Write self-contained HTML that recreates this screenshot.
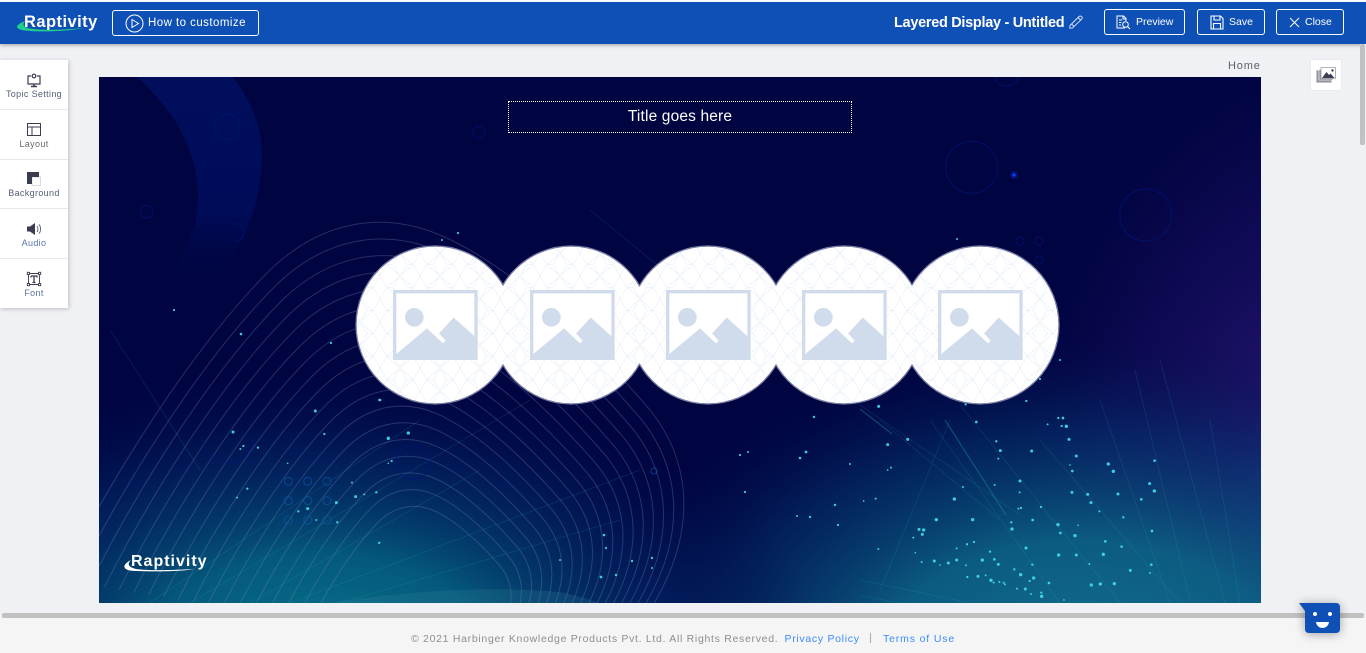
<!DOCTYPE html>
<html><head><meta charset="utf-8"><title>Raptivity</title>
<style>
html,body{margin:0;padding:0;width:1366px;height:653px;overflow:hidden;background:#f0f1f5;font-family:"Liberation Sans",sans-serif}
.a{position:absolute;white-space:nowrap}
.btn{position:absolute;box-sizing:border-box;border:1px solid #fff;border-radius:3px;height:26px;top:9px;color:#fff}
.side{position:absolute;left:0;width:68px;text-align:center;font-size:9px;letter-spacing:.35px;color:#55607a}
svg{position:absolute;overflow:visible}
</style></head><body>
<!-- stage -->
<svg style="left:99px;top:77px" width="1162" height="526" viewBox="99 77 1162 526">
<defs>
<clipPath id="c"><rect x="99" y="77" width="1162" height="526"/></clipPath>
<radialGradient id="t1" gradientUnits="userSpaceOnUse" cx="320" cy="660" r="1" gradientTransform="translate(320 660) scale(500 300) translate(-320 -660)"><stop offset="0" stop-color="#07788e"/><stop offset=".35" stop-color="#056282" stop-opacity=".9"/><stop offset=".7" stop-color="#02296a" stop-opacity=".55"/><stop offset="1" stop-color="#010a48" stop-opacity="0"/></radialGradient>
<radialGradient id="t2" gradientUnits="userSpaceOnUse" cx="1080" cy="680" r="1" gradientTransform="translate(1080 680) scale(520 350) translate(-1080 -680)"><stop offset="0" stop-color="#14748f"/><stop offset=".4" stop-color="#0c6285" stop-opacity=".92"/><stop offset=".72" stop-color="#04306c" stop-opacity=".6"/><stop offset="1" stop-color="#010a48" stop-opacity="0"/></radialGradient>
<radialGradient id="t3" gradientUnits="userSpaceOnUse" cx="1330" cy="560" r="1" gradientTransform="translate(1330 560) scale(340 540) translate(-1330 -560)"><stop offset="0" stop-color="#2d4f95"/><stop offset=".35" stop-color="#1f1468"/><stop offset=".7" stop-color="#120b58" stop-opacity=".7"/><stop offset="1" stop-color="#05064a" stop-opacity="0"/></radialGradient>
<linearGradient id="cr" x1="0" y1="0" x2="0" y2="1"><stop offset="0" stop-color="#000e5c"/><stop offset=".6" stop-color="#000c58"/><stop offset="1" stop-color="#000440" stop-opacity="0"/></linearGradient>
<path id="w" d="M60 580C110 480 190 350 270 270C320 222 380 210 440 235C510 265 590 340 650 410C690 460 700 530 650 610" fill="none" stroke="#7d8cc0" stroke-width="1" vector-effect="non-scaling-stroke"/>
<pattern id="hex" width="40" height="23" patternUnits="userSpaceOnUse"><path d="M0 0L6.700 11.500L0 23M40 0L33.300 11.500L40 23M6.700 11.500H13.300M26.700 11.500H33.300M13.300 11.500L20 0L26.700 11.500L20 23ZM0 0L13.300 11.500M40 0L26.700 11.500M0 23L13.300 11.500M40 23L26.700 11.500" fill="none" stroke="#eff4fb" stroke-width=".9"/></pattern>
<g id="pic" transform="scale(.3333)"><path d="M0 0H254V210H0Z" fill="#d0dcec"/><path d="M10 10H244V138L182 83L138 130L158 152L150 160L102 115L10 192Z" fill="#fff"/><circle cx="64" cy="82" r="28" fill="#d0dcec"/></g>
</defs>
<g clip-path="url(#c)">
<rect x="99" y="77" width="1162" height="526" fill="#000440"/>
<path d="M137 77C190 125 205 175 195 225C185 255 170 280 155 300L205 300C245 250 262 200 262 154C262 125 250 100 233 77Z" fill="url(#cr)"/>
<rect x="99" y="77" width="1162" height="526" fill="url(#t3)"/>
<rect x="99" y="77" width="1162" height="526" fill="url(#t2)"/>
<rect x="99" y="77" width="1162" height="526" fill="url(#t1)"/>
<!-- contour lines -->
<g opacity=".3">
<use href="#w"/>
<use href="#w" transform="translate(430 640) scale(.96) translate(-430 -640)"/>
<use href="#w" transform="translate(430 640) scale(.92) translate(-430 -640)"/>
<use href="#w" transform="translate(430 640) scale(.88) translate(-430 -640)"/>
<use href="#w" transform="translate(430 640) scale(.84) translate(-430 -640)"/>
<use href="#w" transform="translate(430 640) scale(.8) translate(-430 -640)"/>
<use href="#w" transform="translate(430 640) scale(.76) translate(-430 -640)"/>
<use href="#w" transform="translate(430 640) scale(.72) translate(-430 -640)"/>
<use href="#w" transform="translate(430 640) scale(.68) translate(-430 -640)"/>
<use href="#w" transform="translate(430 640) scale(.64) translate(-430 -640)"/>
<use href="#w" transform="translate(430 640) scale(.6) translate(-430 -640)"/>
<use href="#w" transform="translate(430 640) scale(.56) translate(-430 -640)"/>
<use href="#w" transform="translate(430 640) scale(.52) translate(-430 -640)"/>
<use href="#w" transform="translate(430 640) scale(.48) translate(-430 -640)"/>
<use href="#w" transform="translate(430 640) scale(.44) translate(-430 -640)"/>
<use href="#w" transform="translate(430 640) scale(.4) translate(-430 -640)"/>
<use href="#w" transform="translate(430 640) scale(.36) translate(-430 -640)"/>
<use href="#w" transform="translate(430 640) scale(.32) translate(-430 -640)"/>
</g>
<path d="M330 603C400 592 480 585 560 592C580 596 590 600 600 603Z" fill="#3d8aa0" opacity=".2"/>
<!-- teal rays -->
<g stroke="#27b7c4" stroke-width=".8" fill="none" opacity=".17">
<path d="M150 603L420 420M190 603L530 400M250 603L480 470M290 603L640 470M340 603L620 520M110 330L200 470M590 210L700 300"/>
<path d="M860 405L1020 515M960 405L1120 603M1040 440L1180 603M930 420L1060 603M880 420L1000 520M1135 370L1190 600M1160 360L1225 603M1210 420L1240 603M1100 400L1170 603M950 420L880 590M860 580L970 603M860 596L1000 620"/>
</g>
<path d="M860 409L892 434M945 420L1006 515" stroke="#1f9aa8" stroke-width="1.200" opacity=".4" fill="none"/>
<!-- dark rings -->
<g fill="none" stroke="#00177a" stroke-width="1.200" opacity=".6">
<circle cx="227.700" cy="126.700" r="12.500"/><circle cx="146.700" cy="211.700" r="6.300"/><path d="M235 223A9 9 0 0 1 235 241"/>
<circle cx="479" cy="132" r="6"/><circle cx="971.700" cy="167.300" r="26"/><circle cx="1145.700" cy="215" r="26"/><circle cx="1006.700" cy="73" r="13"/>
<circle cx="1020" cy="241" r="4"/><circle cx="1039" cy="241" r="4"/><circle cx="1039" cy="260" r="4"/><circle cx="1020" cy="260" r="4"/>
<path d="M202 436A26 26 0 0 0 254 436"/><circle cx="412.700" cy="462" r="17"/>
</g>
<g fill="none" stroke="#0b5cb0" stroke-width="1.100" opacity=".6">
<circle cx="288.300" cy="481.300" r="4"/><circle cx="307.700" cy="481.300" r="4"/><circle cx="327" cy="481.300" r="4"/>
<circle cx="288.300" cy="500.700" r="4"/><circle cx="307.700" cy="500.700" r="4"/><circle cx="327" cy="500.700" r="4"/>
<circle cx="288.300" cy="520" r="4"/><circle cx="307.700" cy="520" r="4"/><circle cx="327" cy="520" r="4"/>
<circle cx="654" cy="471" r="3"/>
</g>
<circle cx="1014" cy="175" r="4" fill="#0a2fd0" opacity=".3"/><circle cx="1014" cy="175" r="1.800" fill="#0a37f0"/>
<!-- stars right -->
<g fill="#43dbe8" opacity=".92" transform="translate(860 400) scale(.3333)">
<circle cx="56" cy="19" r="4.500"/><circle cx="317" cy="13" r="3.500"/><circle cx="499" cy="3" r="3.500"/><circle cx="349" cy="66" r="4"/><circle cx="595" cy="54" r="3.500"/><circle cx="609" cy="54" r="4"/><circle cx="563" cy="73" r="3"/><circle cx="605" cy="78" r="3.500"/><circle cx="619" cy="79" r="5"/><circle cx="143" cy="118" r="4.500"/><circle cx="83" cy="134" r="4.500"/><circle cx="409" cy="124" r="3.500"/><circle cx="627" cy="118" r="4.500"/><circle cx="421" cy="152" r="4.500"/><circle cx="515" cy="153" r="4.500"/><circle cx="649" cy="168" r="4.500"/><circle cx="415" cy="176" r="3"/><circle cx="884" cy="182" r="4"/><circle cx="745" cy="192" r="5"/><circle cx="630" cy="195" r="2.500"/><circle cx="93" cy="203" r="3"/><circle cx="83" cy="210" r="2.500"/><circle cx="637" cy="213" r="4"/><circle cx="760" cy="214" r="5"/><circle cx="480" cy="243" r="4.500"/><circle cx="404" cy="255" r="3"/><circle cx="309" cy="261" r="3"/><circle cx="869" cy="251" r="4.500"/><circle cx="883" cy="273" r="5"/><circle cx="479" cy="277" r="3"/><circle cx="636" cy="277" r="4.500"/><circle cx="683" cy="283" r="4.500"/><circle cx="774" cy="282" r="4.500"/><circle cx="283" cy="297" r="5"/><circle cx="47" cy="296" r="3"/><circle cx="11" cy="303" r="2.500"/><circle cx="844" cy="298" r="4"/><circle cx="693" cy="308" r="4.500"/><circle cx="475" cy="326" r="3"/><circle cx="483" cy="324" r="3.500"/><circle cx="543" cy="321" r="3.500"/><circle cx="718" cy="334" r="3"/><circle cx="229" cy="359" r="5"/><circle cx="338" cy="359" r="5"/><circle cx="518" cy="360" r="4"/><circle cx="790" cy="352" r="3.500"/><circle cx="454" cy="367" r="3.500"/><circle cx="594" cy="374" r="5"/><circle cx="654" cy="376" r="2.500"/><circle cx="456" cy="387" r="5"/><circle cx="177" cy="388" r="4.500"/><circle cx="191" cy="390" r="5"/><circle cx="601" cy="399" r="4"/><circle cx="187" cy="403" r="4.500"/><circle cx="160" cy="413" r="3"/><circle cx="645" cy="407" r="5"/><circle cx="876" cy="393" r="4"/><circle cx="342" cy="426" r="3.500"/><circle cx="321" cy="433" r="3.500"/><circle cx="736" cy="424" r="4"/><circle cx="785" cy="440" r="4"/><circle cx="55" cy="447" r="3"/><circle cx="290" cy="445" r="3"/><circle cx="498" cy="444" r="4.500"/><circle cx="390" cy="455" r="3.500"/><circle cx="166" cy="458" r="2.500"/><circle cx="596" cy="465" r="5"/><circle cx="649" cy="465" r="4.500"/><circle cx="730" cy="463" r="5"/><circle cx="223" cy="483" r="4.500"/><circle cx="185" cy="486" r="3"/><circle cx="290" cy="480" r="4.500"/><circle cx="265" cy="489" r="4.500"/><circle cx="240" cy="495" r="2.500"/><circle cx="367" cy="480" r="5"/><circle cx="403" cy="478" r="4"/><circle cx="415" cy="493" r="4.500"/><circle cx="318" cy="496" r="3"/><circle cx="517" cy="494" r="3.500"/><circle cx="688" cy="492" r="3"/><circle cx="874" cy="494" r="4"/><circle cx="463" cy="508" r="3.500"/><circle cx="811" cy="511" r="4.500"/><circle cx="870" cy="519" r="3"/><circle cx="322" cy="531" r="3.500"/><circle cx="354" cy="529" r="4.500"/><circle cx="377" cy="526" r="3"/><circle cx="482" cy="524" r="5"/><circle cx="521" cy="534" r="5"/><circle cx="393" cy="541" r="5"/><circle cx="401" cy="548" r="3"/><circle cx="418" cy="546" r="3"/><circle cx="431" cy="548" r="3"/><circle cx="435" cy="553" r="3"/><circle cx="509" cy="543" r="3.500"/><circle cx="567" cy="549" r="4"/><circle cx="694" cy="555" r="5"/><circle cx="721" cy="552" r="5"/><circle cx="763" cy="551" r="5"/><circle cx="471" cy="566" r="3"/><circle cx="496" cy="567" r="4.500"/><circle cx="513" cy="582" r="3"/><circle cx="544" cy="578" r="3.500"/><circle cx="545" cy="589" r="5"/><circle cx="612" cy="600" r="2.500"/>
</g>
<!-- stars left -->
<g fill="#43dbe8" opacity=".92" transform="translate(100 400) scale(.3333)">
<circle cx="646" cy="33" r="4.500"/><circle cx="838" cy="0" r="3.500"/><circle cx="399" cy="96" r="4.500"/><circle cx="673" cy="102" r="3.500"/><circle cx="865" cy="115" r="5"/><circle cx="925" cy="99" r="5"/><circle cx="430" cy="138" r="3.500"/><circle cx="421" cy="147" r="3"/><circle cx="474" cy="143" r="3.500"/><circle cx="563" cy="190" r="2.500"/><circle cx="875" cy="183" r="3.500"/><circle cx="865" cy="190" r="2.500"/><circle cx="442" cy="266" r="3.500"/><circle cx="411" cy="293" r="3"/><circle cx="756" cy="248" r="3"/><circle cx="767" cy="290" r="4.500"/><circle cx="793" cy="283" r="3"/><circle cx="829" cy="277" r="3.500"/><circle cx="709" cy="308" r="4.500"/><circle cx="623" cy="326" r="4.500"/><circle cx="595" cy="334" r="3.500"/><circle cx="649" cy="360" r="3"/><circle cx="712" cy="367" r="3.500"/><circle cx="838" cy="428" r="3"/>
</g>
<!-- stars page coords -->
<g fill="#43dbe8" opacity=".92">
<circle cx="174" cy="310" r="1.100"/><circle cx="241" cy="334" r="1.300"/><circle cx="331" cy="343" r="1.100"/><circle cx="380" cy="400" r="1.300"/><circle cx="458" cy="233" r="1.100"/><circle cx="442" cy="240" r="1"/><circle cx="957" cy="239" r="1"/><circle cx="601" cy="577" r="1.400"/><circle cx="616" cy="575" r="1.200"/><circle cx="632" cy="561" r="1.200"/><circle cx="652" cy="558" r="1.200"/><circle cx="652" cy="568" r="1"/><circle cx="604" cy="535" r="1.300"/><circle cx="606" cy="548" r="1.100"/><circle cx="740" cy="455" r="1.100"/><circle cx="748" cy="452" r="1"/><circle cx="800" cy="458" r="1.300"/><circle cx="806" cy="452" r="1.400"/><circle cx="745" cy="492" r="1.100"/><circle cx="835" cy="505" r="1.200"/><circle cx="810" cy="517" r="1.200"/><circle cx="838" cy="525" r="1.100"/><circle cx="797" cy="516" r="1"/><circle cx="814" cy="417" r="1.200"/><circle cx="850" cy="464" r="1"/><circle cx="1040" cy="379" r="1.100"/><circle cx="1060" cy="360" r="1"/><circle cx="560" cy="560" r="1"/><circle cx="379" cy="543" r="1"/>
</g>
<!-- circles -->
<g fill="none" stroke="#7a7fa8" stroke-width="1.200">
<circle cx="435" cy="325" r="79"/><circle cx="571" cy="325" r="79"/><circle cx="708" cy="325" r="79"/><circle cx="844" cy="325" r="79"/><circle cx="980" cy="325" r="79"/>
</g>
<g fill="#fff"><circle cx="435" cy="325" r="78.400"/><circle cx="571" cy="325" r="78.400"/><circle cx="708" cy="325" r="78.400"/><circle cx="844" cy="325" r="78.400"/><circle cx="980" cy="325" r="78.400"/></g>
<g fill="url(#hex)"><circle cx="435" cy="325" r="78"/><circle cx="571" cy="325" r="78"/><circle cx="708" cy="325" r="78"/><circle cx="844" cy="325" r="78"/><circle cx="980" cy="325" r="78"/></g>
<use href="#pic" transform="translate(393 290)"/><use href="#pic" transform="translate(530 290)"/><use href="#pic" transform="translate(666 290)"/><use href="#pic" transform="translate(802 290)"/><use href="#pic" transform="translate(938 290)"/>
<!-- stage logo swoosh -->
<path d="M131 560C121 565 122 571 136 571C160 572 185 571 194 569C175 570 150 571 136 569C128 567 127 564 131 560Z" fill="#fff"/>
</g>
</svg>
<div class="a" style="left:131px;top:553px;font-size:16px;font-weight:bold;letter-spacing:1px;color:#fff;line-height:18px">Raptivity</div>
<div class="a" style="left:508px;top:101px;width:344px;height:32px;box-sizing:border-box;border:1px dotted #fff;color:#fff;font-size:15.500px;letter-spacing:.15px;line-height:29px;text-align:center">Title goes here</div>

<!-- header -->
<div class="a" style="left:0;top:2px;width:1366px;height:42px;background:#0e50b5;box-shadow:0 1px 4px rgba(0,0,0,.35)"></div>
<div class="a" style="left:0;top:0;width:1366px;height:2px;background:#fbfcfe"></div>
<div class="a" style="left:24px;top:12px;font-size:16.500px;line-height:20px;font-weight:bold;letter-spacing:.45px;color:#fff">Raptivity</div>
<svg style="left:15px;top:21px" width="72" height="12" viewBox="0 0 72 12"><path d="M10 0C0 4 -1 8 10 9.500C28 11.500 54 10 69 7C50 9 26 9.500 14 7.500C8 6 7 3 10 0Z" fill="#1fd08a"/></svg>
<div class="btn" style="left:112px;width:147px;top:10px"><svg style="left:12px;top:3px" width="19" height="19" viewBox="0 0 19 19" fill="none" stroke="#fff" stroke-width="1"><circle cx="9.500" cy="9.500" r="8.500"/><path d="M7 5.500L13.500 9.500L7 13.500Z"/></svg><span class="a" style="left:35px;top:0;font-size:11.500px;line-height:24px;letter-spacing:.45px">How to customize</span></div>
<div class="a" style="left:894px;top:14px;font-size:14.500px;line-height:18px;font-weight:bold;letter-spacing:-.3px;color:#fff">Layered Display - Untitled</div>
<svg style="left:1069px;top:15px" width="14" height="14" viewBox="0 0 14 14" fill="none" stroke="#dfe8f8" stroke-width=".9"><path d="M1 10.500L10 1.500C11 .6 12.500 1.200 13 2C13.400 3 13 3.800 12.500 4.300L3.500 13L.8 13.300ZM2.500 9L5 11.500M9 2.500L11.500 5"/></svg>
<div class="btn" style="left:1104px;width:81px"><svg style="left:11px;top:5px" width="15" height="15" viewBox="0 0 15 15" fill="none" stroke="#fff" stroke-width="1"><path d="M9 13H1V1H7.500L10 3.500V6M7 1V4H10M3 5H6M3 7.500H5.500M3 10H5"/><circle cx="9.500" cy="9.500" r="2.800"/><path d="M11.500 11.500L14 14"/></svg><span class="a" style="left:31px;top:1px;font-size:10.500px;line-height:23px">Preview</span></div>
<div class="btn" style="left:1197px;width:68px"><svg style="left:12px;top:5px" width="14" height="15" viewBox="0 0 14 15" fill="none" stroke="#fff" stroke-width="1.100"><path d="M1 1H10.500L13 3.500V14H1ZM4 1V5H10V1M3.500 14V8.500H10.500V14"/></svg><span class="a" style="left:31px;top:1px;font-size:10.500px;line-height:23px">Save</span></div>
<div class="btn" style="left:1276px;width:68px"><svg style="left:12px;top:7px" width="11" height="11" viewBox="0 0 11 11" fill="none" stroke="#fff" stroke-width="1"><path d="M1 1L10 10M10 1L1 10"/></svg><span class="a" style="left:28px;top:1px;font-size:10.500px;line-height:23px">Close</span></div>

<!-- sidebar -->
<div class="a" style="left:0;top:60px;width:68px;height:248px;background:#fff;box-shadow:1px 1px 4px rgba(0,0,0,.22)"></div>
<div class="a" style="left:0;top:109px;width:68px;height:1px;background:#e8e9ec"></div>
<div class="a" style="left:0;top:159px;width:68px;height:1px;background:#e8e9ec"></div>
<div class="a" style="left:0;top:208px;width:68px;height:1px;background:#e8e9ec"></div>
<div class="a" style="left:0;top:258px;width:68px;height:1px;background:#e8e9ec"></div>
<svg style="left:27px;top:73px" width="14" height="15" viewBox="0 0 14 15" fill="none" stroke="#3a3c50" stroke-width="1.200"><path d="M4 3H1V11H13V3H10"/><circle cx="7" cy="3" r="1.800"/><path d="M4 13.500H10M7 11V13.500" stroke-width="1.500"/></svg>
<div class="side" style="top:88px;line-height:12px">Topic Setting</div>
<svg style="left:27px;top:123px" width="14" height="13" viewBox="0 0 14 13" fill="none" stroke="#3a3c50" stroke-width="1"><path d="M.5 .5H13.500V12.500H.5ZM.5 4H13.500M5 4V12.500"/></svg>
<div class="side" style="top:138px;line-height:12px;color:#6c6a62">Layout</div>
<svg style="left:27px;top:172px" width="14" height="14" viewBox="0 0 14 14"><rect x="5" y="5" width="8.500" height="8.500" fill="#fff" stroke="#c9cad2" stroke-width=".7"/><path d="M0 0H12V5H5V12H0Z" fill="#3a3c50"/></svg>
<div class="side" style="top:187px;line-height:12px">Background</div>
<svg style="left:27px;top:222px" width="15" height="14" viewBox="0 0 15 14"><path d="M0 4.500H3L8 1V13L3 9.500H0Z" fill="#3a3c50"/><path d="M10 4C11.200 5.500 11.200 8.500 10 10M12 2.500C14 4.500 14 9.500 12 11.500" fill="none" stroke="#5a5c70" stroke-width=".9"/></svg>
<div class="side" style="top:237px;line-height:12px;color:#5b74a8">Audio</div>
<svg style="left:27px;top:272px" width="14" height="14" viewBox="0 0 14 14" fill="none" stroke="#3a3c50" stroke-width=".9"><path d="M1.500 1.500H12.500V12.500H1.500Z"/><path d="M4 4H10V5.500M4 5.500V4M7 4V10.500M5.500 10.500H8.500" stroke-width="1.300"/><rect x=".3" y=".3" width="2.200" height="2.200" fill="#fff"/><rect x="11.500" y=".3" width="2.200" height="2.200" fill="#fff"/><rect x=".3" y="11.500" width="2.200" height="2.200" fill="#fff"/><rect x="11.500" y="11.500" width="2.200" height="2.200" fill="#fff"/></svg>
<div class="side" style="top:287px;line-height:12px;color:#5b74a8">Font</div>

<!-- right -->
<div class="a" style="left:1228px;top:60px;font-size:11px;line-height:13px;letter-spacing:.85px;color:#5c6068">Home</div>
<div class="a" style="left:1311px;top:60px;width:30px;height:30px;background:#fff;box-shadow:0 0 1px rgba(0,0,0,.12)"></div>
<svg style="left:1316px;top:67px" width="20" height="17" viewBox="0 0 20 17"><path d="M1 4H15V15H1Z" fill="#9a9ba8" stroke="#8a8b98"/><path d="M3 2.500H17V13H3Z" fill="#8a8b98" stroke="#fff" stroke-width=".6"/><path d="M5 .5H19.500V11.500H5Z" fill="#fff" stroke="#9a9ba8" stroke-width=".8"/><path d="M6 11L10.500 5L13 8L14.500 6.500L18.500 11Z" fill="#3a3c50"/><circle cx="16.500" cy="3.500" r="1.200" fill="#3a3c50"/></svg>
<div class="a" style="left:1360px;top:44px;width:6px;height:609px;background:#f0f1f5"></div>
<div class="a" style="left:1360px;top:44px;width:5px;height:101px;background:#c1c1c1;border-radius:2px"></div>

<!-- footer -->
<div class="a" style="left:0;top:618px;width:1366px;height:35px;background:#f5f5f5"></div>
<div class="a" style="left:2px;top:613px;width:1362px;height:5px;background:#c1c1c1;border-radius:2px"></div>
<div class="a" style="left:411px;top:632px;font-size:10.500px;line-height:14px;letter-spacing:.7px;color:#8e8e8e">© 2021 Harbinger Knowledge Products Pvt. Ltd. All Rights Reserved.</div>
<div class="a" style="left:784.500px;top:632px;font-size:10.500px;line-height:14px;letter-spacing:.7px;color:#3a8bff">Privacy Policy</div>
<div class="a" style="left:870px;top:633px;width:1px;height:10px;background:#b8a894"></div>
<div class="a" style="left:883px;top:632px;font-size:10.500px;line-height:14px;letter-spacing:.85px;color:#3a8bff">Terms of Use</div>

<!-- chat -->
<svg style="left:1299px;top:602px;filter:drop-shadow(0 1px 5px rgba(0,0,0,.35))" width="42" height="32" viewBox="0 0 42 32"><path d="M0 1H37C39.500 1 41 2.500 41 5V27C41 29.500 39.500 31 37 31H10C7.500 31 6 29.500 6 27V9Z" fill="#0e50b5"/><circle cx="16" cy="12" r="2" fill="#fff"/><circle cx="31" cy="12" r="2" fill="#fff"/><path d="M17 20H30C29.500 24 26.500 26 23.500 26C20.500 26 17.500 24 17 20Z" fill="#fff"/></svg>
</body></html>
